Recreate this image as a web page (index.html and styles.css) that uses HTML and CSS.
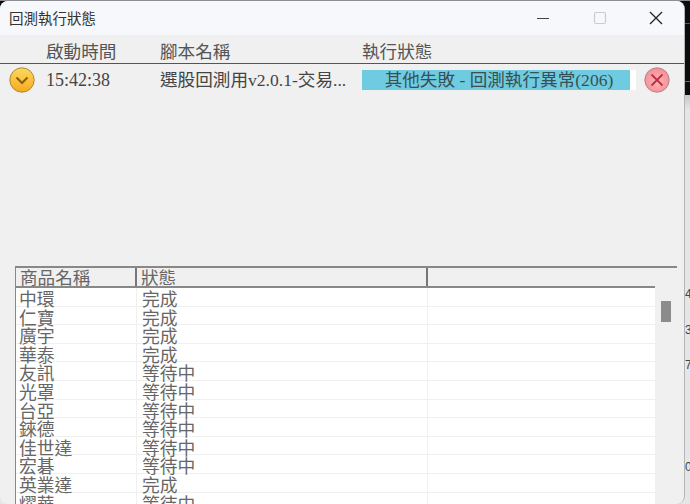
FILE: index.html
```html
<!DOCTYPE html>
<html lang="zh-Hant">
<head>
<meta charset="utf-8">
<title>回測執行狀態</title>
<link rel="stylesheet" href="styles.css">
</head>
<body>
<div class="desktop">
  <div class="peek-text p1">49</div>
  <div class="peek-text p2">3</div>
  <div class="peek-text p3">7</div>
  <div class="peek-text p4">0</div>
  <main class="window">
    <header class="titlebar">
      <span class="title">回測執行狀態</span>
      <div class="controls">
        <svg class="ctl" width="14" height="14" viewBox="0 0 14 14"><path d="M1 7.5H13" stroke="#444" stroke-width="1.2"/></svg>
        <svg class="ctl" width="14" height="14" viewBox="0 0 14 14"><rect x="1.5" y="1.5" width="11" height="11" rx="1.5" fill="none" stroke="#c9cbcf" stroke-width="1.2"/></svg>
        <svg class="ctl" width="14" height="14" viewBox="0 0 14 14"><path d="M1 1L13 13M13 1L1 13" stroke="#222" stroke-width="1.3"/></svg>
      </div>
    </header>
    <div class="job-head">
      <span class="c-time">啟動時間</span>
      <span class="c-name">腳本名稱</span>
      <span class="c-status">執行狀態</span>
    </div>
    <div class="job-row">
      <svg class="c-icon" width="26" height="26" viewBox="0 0 26 26">
        <defs>
          <linearGradient id="amber" x1="0" y1="0" x2="0" y2="1">
            <stop offset="0" stop-color="#fbd860"/>
            <stop offset="0.55" stop-color="#fbbf3a"/>
            <stop offset="1" stop-color="#f6a823"/>
          </linearGradient>
        </defs>
        <circle cx="13" cy="13" r="12.2" fill="url(#amber)" stroke="#a98a3c" stroke-width="1"/>
        <path d="M7.5 10.5L13 16L18.5 10.5" fill="none" stroke="#8a5a16" stroke-width="2"/>
      </svg>
      <span class="c-time val-time">15:42:38</span>
      <span class="c-name">選股回測用v2.0.1-交易...</span>
      <div class="progress"><div class="progress-fill">其他失敗 - 回測執行異常(206)</div></div>
      <svg class="cancel" width="26" height="26" viewBox="0 0 26 26">
        <defs>
          <radialGradient id="rose" cx="0.5" cy="0.55" r="0.6">
            <stop offset="0" stop-color="#fbb6bb"/>
            <stop offset="1" stop-color="#f48a93"/>
          </radialGradient>
        </defs>
        <circle cx="13" cy="13" r="12.2" fill="url(#rose)" stroke="#b98288" stroke-width="1"/>
        <path d="M7.5 7.5L18.5 18.5M18.5 7.5L7.5 18.5" stroke="#c0303c" stroke-width="1.8"/>
      </svg>
    </div>
    <section class="grid">
      <div class="grid-body">
        <div class="grid-head">
          <div class="cell col1">商品名稱</div>
          <div class="cell col2">狀態</div>
          <div class="cell col3"></div>
        </div>
        <div class="grid-row"><div class="cell col1">中環</div><div class="cell col2">完成</div><div class="cell col3"></div></div>
        <div class="grid-row"><div class="cell col1">仁寶</div><div class="cell col2">完成</div><div class="cell col3"></div></div>
        <div class="grid-row"><div class="cell col1">廣宇</div><div class="cell col2">完成</div><div class="cell col3"></div></div>
        <div class="grid-row"><div class="cell col1">華泰</div><div class="cell col2">完成</div><div class="cell col3"></div></div>
        <div class="grid-row"><div class="cell col1">友訊</div><div class="cell col2">等待中</div><div class="cell col3"></div></div>
        <div class="grid-row"><div class="cell col1">光罩</div><div class="cell col2">等待中</div><div class="cell col3"></div></div>
        <div class="grid-row"><div class="cell col1">台亞</div><div class="cell col2">等待中</div><div class="cell col3"></div></div>
        <div class="grid-row"><div class="cell col1">錸德</div><div class="cell col2">等待中</div><div class="cell col3"></div></div>
        <div class="grid-row"><div class="cell col1">佳世達</div><div class="cell col2">等待中</div><div class="cell col3"></div></div>
        <div class="grid-row"><div class="cell col1">宏碁</div><div class="cell col2">等待中</div><div class="cell col3"></div></div>
        <div class="grid-row"><div class="cell col1">英業達</div><div class="cell col2">完成</div><div class="cell col3"></div></div>
        <div class="grid-row"><div class="cell col1">燿華</div><div class="cell col2">等待中</div><div class="cell col3"></div></div>
      </div>
      <div class="scrollbar"><div class="thumb"></div></div>
    </section>
  </main>
</div>
</body>
</html>
```
FILE: styles.css
```css
* { box-sizing: border-box; }
html, body { margin: 0; height: 100%; overflow: hidden; }
body { font-family: "Liberation Serif", "Noto Sans CJK TC", serif; color: #444; }
.desktop {
  position: relative; width: 690px; height: 504px; overflow: hidden;
  background: linear-gradient(#8d8f94 0, #8d8f94 1px, #0c0c0e 1px, #0c0c0e 23px, #7a4a5c 23px, #7a4a5c 24px, #0c0c0e 24px, #0c0c0e 81px, #4e7c62 81px, #4e7c62 82px, #0c0c0e 82px, #0c0c0e 95px, #c4c6cc 95px, #e6e6e8 110px);
}
.peek-text { position: absolute; left: 685px; font-size: 12px; color: #444; font-family: "Liberation Sans", sans-serif; }
.p1 { top: 287px; } .p2 { top: 323px; } .p3 { top: 358px; } .p4 { top: 460px; }
.window {
  position: absolute; left: 0; top: 1px; width: 685px; height: 503px;
  background: #f0f0f0; border-radius: 8px;
  border-right: 1px solid #b5b5b5; overflow: hidden;
  display: flex; flex-direction: column;
}
.titlebar {
  height: 34px; flex: none; background: #f7f8fc;
  display: flex; align-items: center; justify-content: space-between;
  padding-left: 9px;
}
.title { font-size: 14.5px; color: #333; font-family: "Noto Sans CJK TC", sans-serif; position: relative; top: -1px; }
.controls { display: flex; align-items: center; gap: 42.5px; padding-right: 21px; }
.job-head {
  height: 29px; flex: none; display: flex; align-items: center;
  background: #f0f0f0; border-bottom: 1px solid #555;
  font-size: 17.6px; font-family: "Noto Sans CJK TC", sans-serif; color: #555;
  padding: 2px 0 0 46px;
}
.c-time { width: 114px; flex: none; }
.c-name { width: 202px; flex: none; white-space: nowrap; }
.c-status { flex: none; }
.job-row {
  display: flex; align-items: center; height: 32px; flex: none;
  padding-left: 9px; font-size: 17.6px; color: #444;
}
.c-icon { flex: none; margin-right: 11px; }
.val-time { font-size: 18px; width: 114px; }
.job-row .c-name { font-family: "Liberation Serif", "Noto Sans CJK TC", serif; margin-bottom: 4px; }
.progress { width: 274px; height: 20px; flex: none; background: #fff; }
.progress-fill {
  width: 268px; height: 100%; background: #6fcbdf; text-align: center;
  padding-left: 6px;
  font-size: 17.6px; line-height: 20px; color: #3a4f55; white-space: nowrap;
}
.cancel { flex: none; margin-left: 8px; }
.grid {
  margin: 170px 0 0 15px; width: 662px; flex: 1; min-height: 0;
  display: flex; background: #f0f0f0;
  border-left: 1px solid #888; border-top: 2px solid #888;
}
.grid-body { flex: 1; min-width: 0; background: #fff; overflow: hidden; }
.grid-head { display: flex; height: 20px; background: #f0f0f0; border-bottom: 2px solid #888; font-family: "Noto Sans CJK TC", sans-serif; color: #666; }
.grid-head .col1, .grid-head .col2 { border-right: 2px solid #777; }
.grid-head .cell { padding-top: 0; padding-left: 4px; font-size: 17.6px; line-height: 18px; }
.grid-row { display: flex; height: 18.6px; border-bottom: 1px solid #f0f0f0; color: #666; }
.cell { white-space: nowrap; font-size: 17.8px; line-height: 18px; padding-top: 1px; font-family: "Noto Sans CJK TC", sans-serif; }
.col1 { width: 121px; flex: none; padding-left: 3px; }
.col2 { width: 291px; flex: none; padding-left: 5px; }
.col3 { flex: 1; }
.grid-row .col1, .grid-row .col2 { border-right: 1px solid #f0f0f0; }
.scrollbar { width: 22px; flex: none; padding: 33px 0 0 6px; background: #f0f0f0; }
.thumb { width: 10px; height: 21px; background: #8b8b8b; }
```
